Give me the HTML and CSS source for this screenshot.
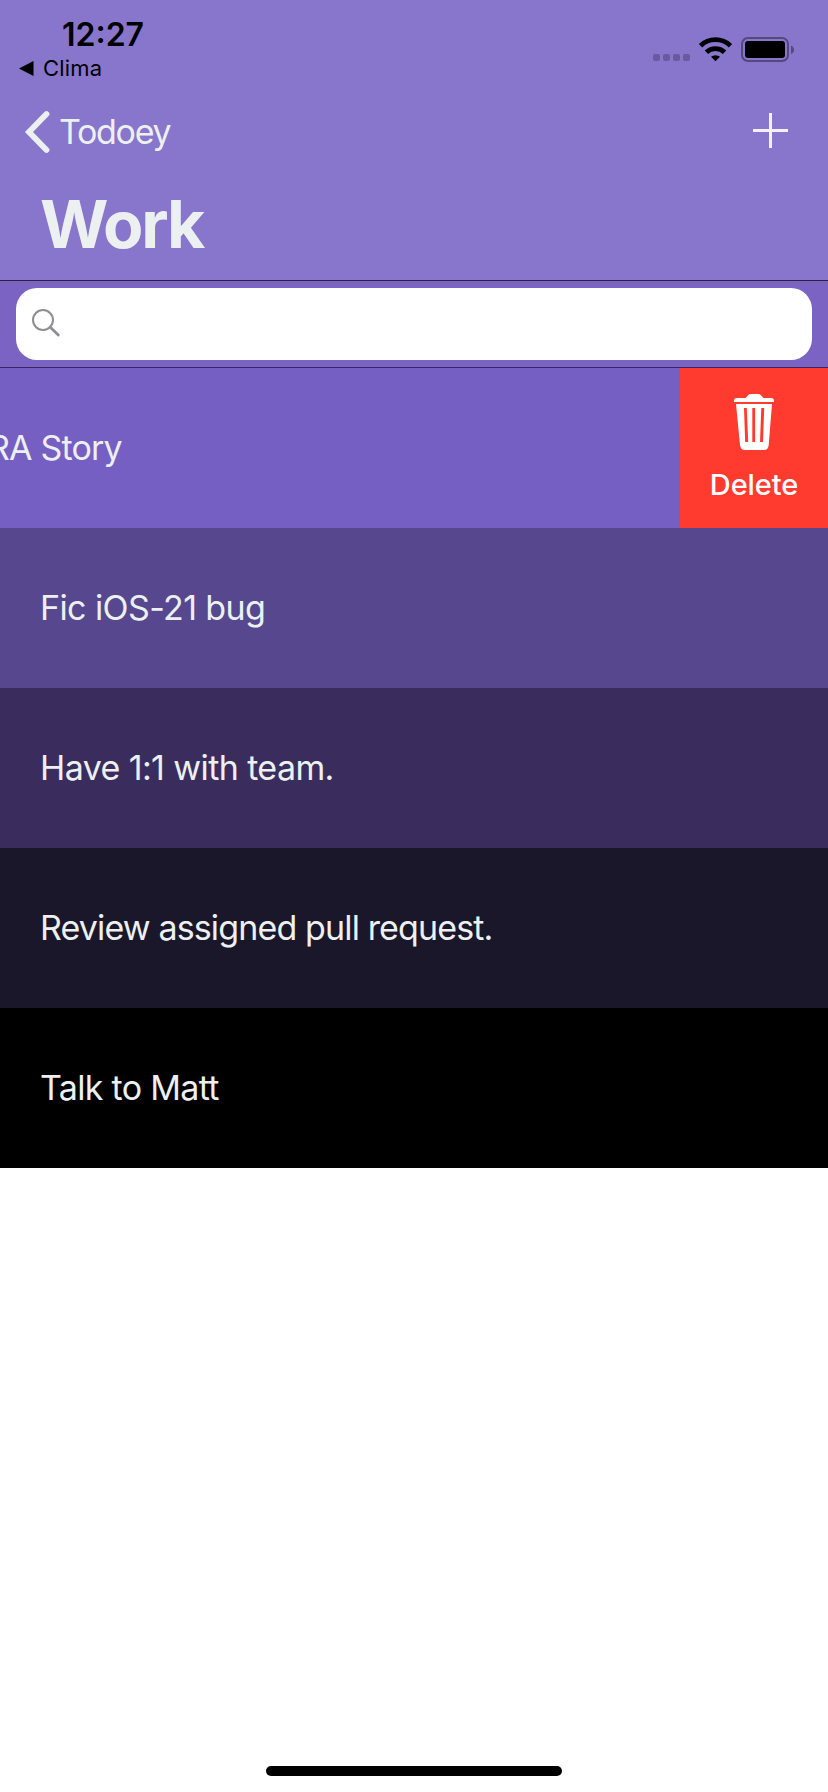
FILE: index.html
```
<!DOCTYPE html>
<html lang="en">
<head>
<meta charset="utf-8">
<title>Work</title>
<link rel="stylesheet" href="styles.css">
</head>
<body>
<div class="screen">
  <header class="header">
    <div class="status">
      <div class="status-left">
        <div class="time">12:27</div>
        <div class="return"><svg width="15" height="15" viewBox="0 0 15 15"><path d="M0 7.500L14.500 0v15z"/></svg><span class="return-app">Clima</span></div>
      </div>
      <div class="status-icons">
        <svg width="146" height="28" viewBox="0 0 146 28">
          <g class="faint"><rect x="0" y="18" width="7" height="7" rx="2"/><rect x="10" y="18" width="7" height="7" rx="2"/><rect x="20" y="18" width="7" height="7" rx="2"/><rect x="30" y="18" width="7" height="7" rx="2"/></g>
          <path class="wave" d="M47.500 9.800A21.500 21.500 0 0 1 77.500 9.800M53.400 16.300A13 13 0 0 1 71.600 16.300"/>
          <path d="M58 20.800A7 7 0 0 1 67 20.800L62.500 25.200z"/>
          <rect class="shell" x="89" y="2" width="46" height="23" rx="6"/>
          <rect x="92" y="5" width="40" height="17" rx="3"/>
          <path class="nub" d="M138 9.500c4 1.500 4 7 0 8.500z"/>
        </svg>
      </div>
    </div>
    <nav class="nav">
      <a class="back"><svg width="26" height="44" viewBox="0 0 26 44"><path d="M22.500 4L5 22l17.500 18"/></svg><span class="back-label">Todoey</span></a>
      <svg class="add" width="35" height="35" viewBox="0 0 35 35"><path d="M16 0h3v16h16v3H19v16h-3V19H0v-3h16z"/></svg>
    </nav>
    <h1 class="title">Work</h1>
  </header>
  <div class="search">
    <div class="field"><svg width="30" height="30" viewBox="0 0 30 30"><circle cx="11" cy="12" r="10"/><path class="handle" d="M18.300 19.300l8 7.700"/></svg></div>
  </div>
  <main class="list">
    <div class="row row-swiped">
      <div class="row-content"><span class="item item-swiped">RA Story</span></div>
      <div class="delete">
        <svg width="40" height="56" viewBox="0 0 40 56"><path d="M0 8V6.500Q0 4 3 4h8.500L14 1.200Q15 0 17 0h7q2 0 3 1.200L29.500 4H37q3 0 3 2.500V8z"/><path fill-rule="evenodd" d="M2 10h36l-3.300 41q-.4 5-4.700 5H11q-4.500 0-5-5zM10 14l1.200 34h3L12.800 14zM18.300 14v34h2.800V14zM27.300 14L26 48h3l1.200-34z"/></svg>
        <span class="delete-label">Delete</span>
      </div>
    </div>
    <div class="row row-2"><span class="item item-fic">Fic iOS-21 bug</span></div>
    <div class="row row-3"><span class="item item-have">Have 1:1 with team.</span></div>
    <div class="row row-4"><span class="item item-review">Review assigned pull request.</span></div>
    <div class="row row-5"><span class="item item-talk">Talk to Matt</span></div>
  </main>
  <footer class="footer"><div class="home"></div></footer>
</div>
</body>
</html>
```
FILE: styles.css
```
* { box-sizing: border-box; }
body { margin: 0; font-family: Inter, "Liberation Sans", sans-serif; color: #ecf0f1; }
svg { display: block; flex: none; }
.screen { width: 828px; height: 1792px; display: flex; flex-direction: column; background: #fff; overflow: hidden; }
.header { height: 280px; background: #8875cc; }
.status { height: 88px; display: flex; justify-content: space-between; color: #000; }
.status-left { padding: 15px 0 0 19px; }
.time { width: 100px; margin-left: 43px; font-size: 32px; line-height: 39px; font-weight: 600; letter-spacing: 0; white-space: nowrap; }
.return { display: flex; align-items: center; gap: 9px; height: 28px; }
.return-app { font-size: 22px; line-height: 28px; font-weight: 400; letter-spacing: 0.2px; }
.status-icons { padding: 36px 29px 0 0; }
.faint { opacity: .22; }
.wave { fill: none; stroke: #000; stroke-width: 4.800; }
.shell { fill: none; stroke: #54487e; stroke-width: 2; }
.nub { fill: #54487e; }
.nav { height: 88px; display: flex; justify-content: space-between; align-items: center; padding: 0 40px 0 24px; }
.back { display: flex; align-items: center; gap: 9px; }
.back path { fill: none; stroke: #ecf0f1; stroke-width: 5.800; stroke-linecap: round; }
.back-label { font-size: 34px; line-height: 44px; font-weight: 400; letter-spacing: -1.3px; }
.add { fill: #f3f2fa; margin-bottom: 3px; }
.title { margin: 0; padding-left: 40px; font-size: 66px; line-height: 96px; font-weight: 700; letter-spacing: -2.2px; }
.search { height: 88px; padding: 7px 16px; background: #7b63c4; border-top: 1px solid #29213e; border-bottom: 1px solid #36285e; }
.field { height: 72px; padding: 20px 16px; border-radius: 21px; background: #fff; }
.field svg { fill: none; stroke: #8e8e93; stroke-width: 2; }
.field .handle { stroke-width: 2.800; stroke-linecap: round; }
.row { height: 160px; display: flex; align-items: center; padding-left: 40px; }
.item { font-size: 34px; line-height: 44px; font-weight: 400; letter-spacing: -0.9px; white-space: nowrap; }
.row-swiped { padding: 0; background: #755fc2; }
.row-content { width: 680px; display: flex; }
.item-swiped { margin-left: -12px; letter-spacing: -0.8px; }
.item-fic { letter-spacing: -0.6px; }
.item-have { letter-spacing: -0.6px; }
.item-review { letter-spacing: -0.86px; }
.item-talk { letter-spacing: -0.68px; }
.row-2 { background: #56478f; }
.row-3 { background: #3a2d5e; }
.row-4 { background: #1b172a; }
.row-5 { background: #000; }
.delete { width: 148px; height: 160px; padding-top: 26px; display: flex; flex-direction: column; align-items: center; gap: 17px; background: #ff3b30; color: #fff; fill: #fff; }
.delete-label { font-size: 29px; line-height: 36px; font-weight: 500; letter-spacing: -0.1px; }
.footer { flex: 1; display: flex; flex-direction: column; justify-content: flex-end; align-items: center; padding-bottom: 16px; }
.home { width: 296px; height: 10px; border-radius: 5px; background: #000; }
```
